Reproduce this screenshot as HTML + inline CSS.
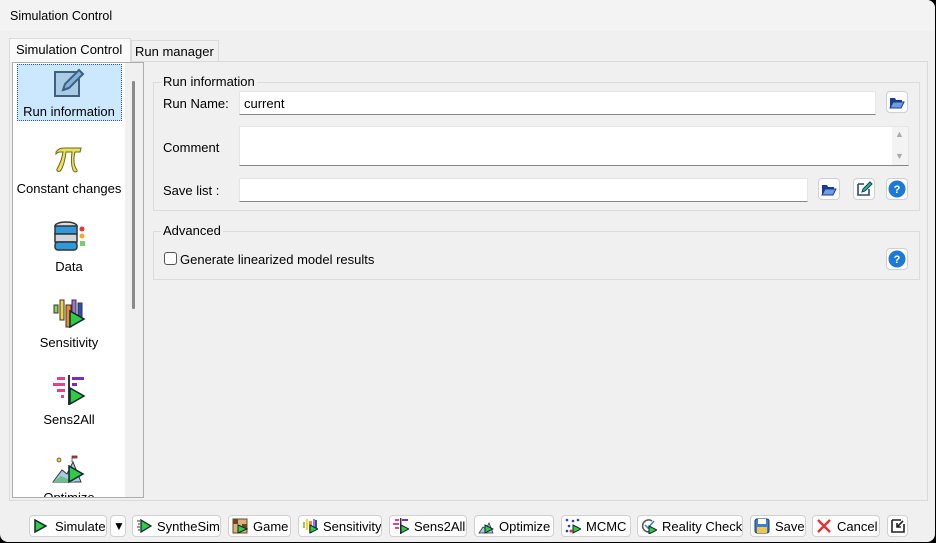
<!DOCTYPE html>
<html><head><meta charset="utf-8"><style>
*{box-sizing:border-box;margin:0;padding:0}
body{width:936px;height:543px;background:#000;font-family:"Liberation Sans",sans-serif;font-size:13px;color:#000;overflow:hidden;position:relative}
#win{position:absolute;left:0;top:0;width:935px;height:542px;background:#f0f0f0;border-radius:0 8px 8px 8px;overflow:hidden}
#title{position:absolute;left:0;top:0;width:935px;height:31px;background:#f3f3f3}
.a{position:absolute}
.txt{position:absolute;white-space:nowrap}
.btn{position:absolute;height:22px;background:#fdfdfd;border:1px solid #d0d0d0;border-radius:4px;display:flex;align-items:center;padding-left:3px;white-space:nowrap;font-size:13px;overflow:hidden}
.btn svg{margin-right:5px;flex:none}
.ib{position:absolute;width:22px;height:22px;background:#fdfdfd;border:1px solid #d0d0d0;border-radius:4px;display:flex;align-items:center;justify-content:center}
.inp{position:absolute;background:#fff;border:1px solid #e5e5e5;border-bottom:1px solid #868686}
.grp{position:absolute;border:1px solid #dcdcdc}
.gt{position:absolute;background:#f0f0f0;padding:0 2px;top:-9px;left:7px;font-size:13px}
.item{position:absolute;left:13px;width:112px;text-align:center;font-size:13px}
.item svg{display:block;margin:0 auto}
</style></head><body>
<div id="win">
<div id="title"><div class="txt" style="left:10px;top:9px;font-size:12.5px">Simulation Control</div></div>

<div class="a" style="left:9px;top:38px;width:122px;height:24px;background:#f9f9f9;border:1px solid #dadada;border-bottom:none"></div>
<div class="txt" style="left:16px;top:42px">Simulation Control</div>
<div class="a" style="left:131px;top:40px;width:88px;height:21px;background:#f0f0f0;border:1px solid #dadada;border-bottom:none"></div>
<div class="txt" style="left:135px;top:44px">Run manager</div>
<div class="a" style="left:9px;top:61px;width:919px;height:440px;border:1px solid #dadada;border-top:none"></div>
<div class="a" style="left:130px;top:61px;width:798px;height:1px;background:#dadada"></div>

<div class="a" style="left:12px;top:62px;width:132px;height:436px;border:1px solid #adadad;background:#fff;overflow:hidden">
 <div class="a" style="left:112px;top:0;width:19px;height:436px;background:#f0f0f0"></div>
 <div class="a" style="left:119px;top:18px;width:3px;height:228px;background:#8a8a8a;border-radius:1px"></div>
</div>
<div class="a" style="left:17px;top:64px;width:105px;height:57px;background:#cce8ff;border:1px dotted #2a5a9a"></div>
<div class="item" style="top:66px">
<svg width="34" height="34" viewBox="0 0 34 34"><rect x="3" y="6" width="24" height="24" fill="#a9cbe6" stroke="#40607e" stroke-width="2"/><path d="M11 24l2-6 14-14 4 4-14 14z" fill="#7fb4e0" stroke="#40607e" stroke-width="2"/><path d="M11 24l6-2" stroke="#40607e" stroke-width="2"/></svg>
<div style="margin-top:4px">Run information</div></div>
<div class="item" style="top:143px">
<svg width="34" height="34" viewBox="0 0 34 34"><path d="M4 9c3-4 6-4 9-4h16l-1 4h-5c-2 8-1 14 2 18 1 2-3 3-4 0-2-5-2-11-1-18h-6c-1 8-3 15-5 18-1 2-5 2-4-1 3-5 5-10 6-17h-3c-2 0-3 1-4 2z" fill="#e8e35a" stroke="#6b6620" stroke-width="1"/></svg>
<div style="margin-top:4px">Constant changes</div></div>
<div class="item" style="top:220px">
<svg width="34" height="34" viewBox="0 0 34 34"><ellipse cx="14" cy="6" rx="11" ry="4" fill="#ddd" stroke="#333" stroke-width="1.5"/><rect x="3" y="6" width="22" height="8" fill="#2e9ad9" stroke="#333" stroke-width="1.5"/><rect x="3" y="14" width="22" height="8" fill="#cfd6dc" stroke="#333" stroke-width="1.5"/><rect x="3" y="22" width="22" height="8" rx="3" fill="#2e9ad9" stroke="#333" stroke-width="1.5"/><circle cx="30" cy="9" r="2.5" fill="#e33"/><circle cx="30" cy="16" r="2.5" fill="#f5a623"/><rect x="28" y="21" width="5" height="5" fill="#7c7"/></svg>
<div style="margin-top:5px">Data</div></div>
<div class="item" style="top:297px">
<svg width="34" height="34" viewBox="0 0 34 34"><rect x="2" y="8" width="4" height="8" fill="#8fd14f" stroke="#333"/><rect x="8" y="3" width="4" height="20" fill="#f5d442" stroke="#333"/><rect x="14" y="8" width="5" height="22" fill="#f08a24" stroke="#333"/><rect x="20" y="3" width="4" height="16" fill="#a070e0" stroke="#333"/><rect x="26" y="6" width="4" height="16" fill="#3050b0" stroke="#333"/><path d="M18 14l14 8-14 8z" fill="#2ecc40" stroke="#123" stroke-width="1.5"/></svg>
<div style="margin-top:4px">Sensitivity</div></div>
<div class="item" style="top:374px">
<svg width="34" height="34" viewBox="0 0 34 34"><rect x="5" y="3" width="8" height="3" fill="#e8408c"/><rect x="1" y="9" width="12" height="3" fill="#e8408c"/><rect x="5" y="15" width="8" height="3" fill="#e8408c"/><rect x="9" y="21" width="3" height="3" fill="#e8408c"/><rect x="16" y="1" width="2" height="30" fill="#333"/><rect x="20" y="3" width="12" height="3" fill="#7030c0"/><rect x="20" y="9" width="5" height="3" fill="#7030c0"/><path d="M18 14l14 8-14 8z" fill="#2ecc40" stroke="#123" stroke-width="1.5"/></svg>
<div style="margin-top:4px">Sens2All</div></div>
<div class="item" style="top:452px;height:45px;overflow:hidden">
<svg width="34" height="34" viewBox="0 0 34 34"><circle cx="7" cy="8" r="2" fill="#f5d442" stroke="#333" stroke-width=".7"/><path d="M1 30l9-12 5 4 6-12 8 20z" fill="#a9cbe6" stroke="#333"/><path d="M1 30l8-6 14 6z" fill="#6cbf8a"/><path d="M20 10v-6h5v2h-5" fill="#e33" stroke="#333" stroke-width=".7"/><path d="M17 14l14 8-14 8z" fill="#2ecc40" stroke="#123" stroke-width="1.5"/></svg>
<div style="margin-top:4px">Optimize</div></div>

<div class="grp" style="left:153px;top:82px;width:767px;height:129px"><div class="gt">Run information</div></div>
<div class="txt" style="left:163px;top:96px">Run Name:</div>
<div class="inp" style="left:239px;top:91px;width:637px;height:24px"></div>
<div class="txt" style="left:244px;top:96px">current</div>
<div class="ib" style="left:886px;top:91px"><svg width="16" height="13" viewBox="0 0 16 13"><path d="M1 2h5l1 2h6v2H4L1 12z" fill="#1e3a8a"/><path d="M4 6h11l-3 6H1z" fill="#6f9be8" stroke="#1e3a8a"/></svg></div>
<div class="txt" style="left:163px;top:140px">Comment</div>
<div class="inp" style="left:239px;top:126px;width:670px;height:40px"></div>
<div class="a" style="left:892px;top:127px;width:16px;height:38px;background:#f3f3f3"></div>
<div class="txt" style="left:895px;top:129px;font-size:9px;color:#aaa">▲</div>
<div class="txt" style="left:895px;top:151px;font-size:9px;color:#aaa">▼</div>
<div class="txt" style="left:163px;top:183px">Save list :</div>
<div class="inp" style="left:239px;top:178px;width:569px;height:24px"></div>
<div class="ib" style="left:818px;top:178px"><svg width="16" height="13" viewBox="0 0 16 13"><path d="M1 2h5l1 2h6v2H4L1 12z" fill="#1e3a8a"/><path d="M4 6h11l-3 6H1z" fill="#6f9be8" stroke="#1e3a8a"/></svg></div>
<div class="ib" style="left:853px;top:178px"><svg width="18" height="18" viewBox="0 0 18 18"><path d="M3 4h6M3 4v11h11v-6" fill="none" stroke="#2a4a6a" stroke-width="1.6"/><path d="M7 12l1-3 7-7 2 2-7 7z" fill="#1fbfa0" stroke="#1a3a4a"/></svg></div>
<div class="ib" style="left:886px;top:178px"><svg width="18" height="18"><circle cx="9" cy="9" r="8.5" fill="#1c79d6"/><text x="9" y="13" font-family="Liberation Sans" font-weight="bold" font-size="11" fill="#fff" text-anchor="middle">?</text></svg></div>

<div class="grp" style="left:153px;top:231px;width:767px;height:49px"><div class="gt">Advanced</div></div>
<div class="a" style="left:164px;top:252px;width:13px;height:13px;border:1px solid #555;border-radius:3px;background:#fff"></div>
<div class="txt" style="left:180px;top:252px">Generate linearized model results</div>
<div class="ib" style="left:886px;top:248px"><svg width="18" height="18"><circle cx="9" cy="9" r="8.5" fill="#1c79d6"/><text x="9" y="13" font-family="Liberation Sans" font-weight="bold" font-size="11" fill="#fff" text-anchor="middle">?</text></svg></div>

<div class="btn" style="left:29px;top:515px;width:78px"><svg width="14" height="14" style="margin-right:8px"><path d="M2 1l11 6-11 6z" fill="#2ecc40" stroke="#123" stroke-width="1.5"/></svg>Simulate</div>
<div class="btn" style="left:110px;top:515px;width:16px;padding-left:2px;font-size:12px">▼</div>
<div class="btn" style="left:132px;top:515px;width:89px"><svg width="16" height="14"><path d="M1 2h3M2 5h2M1 8h3M2 11h2" stroke="#333"/><path d="M5 1l10 6-10 6z" fill="#2ecc40" stroke="#123" stroke-width="1.3"/></svg>SyntheSim</div>
<div class="btn" style="left:228px;top:515px;width:63px"><svg width="16" height="16"><rect x="1" y="1" width="14" height="14" fill="#d7b27a" stroke="#6b4a20"/><rect x="1" y="1" width="5" height="5" fill="#6b4a20"/><rect x="10" y="6" width="5" height="5" fill="#6b4a20"/><path d="M6 7l9 4-9 4z" fill="#2ecc40" stroke="#123"/></svg>Game</div>
<div class="btn" style="left:298px;top:515px;width:84px"><svg width="16" height="16"><rect x="1" y="4" width="2" height="6" fill="#8fd14f"/><rect x="4" y="1" width="2" height="11" fill="#f5d442"/><rect x="7" y="3" width="3" height="12" fill="#f08a24"/><rect x="11" y="1" width="2" height="9" fill="#a070e0"/><rect x="13" y="2" width="2" height="9" fill="#3050b0"/><path d="M8 7l8 4-8 4z" fill="#2ecc40" stroke="#123"/></svg>Sensitivity</div>
<div class="btn" style="left:389px;top:515px;width:78px"><svg width="16" height="16"><rect x="2" y="1" width="4" height="2" fill="#e8408c"/><rect x="0" y="5" width="6" height="2" fill="#e8408c"/><rect x="2" y="9" width="4" height="2" fill="#e8408c"/><rect x="7" y="0" width="1.5" height="16" fill="#333"/><rect x="9" y="1" width="6" height="2" fill="#7030c0"/><path d="M8 7l8 4-8 4z" fill="#2ecc40" stroke="#123"/></svg>Sens2All</div>
<div class="btn" style="left:474px;top:515px;width:80px"><svg width="16" height="16"><path d="M1 15l4-6 3 2 3-6 4 10z" fill="#a9cbe6" stroke="#333" stroke-width=".8"/><path d="M7 7l8 4-8 4z" fill="#2ecc40" stroke="#123"/></svg>Optimize</div>
<div class="btn" style="left:561px;top:515px;width:70px"><svg width="16" height="16"><g fill="#2040d0"><circle cx="2" cy="2" r="1.3"/><circle cx="8" cy="3" r="1.3"/><circle cx="13" cy="2" r="1.3"/><circle cx="4" cy="8" r="1.3"/><circle cx="2" cy="13" r="1.3"/></g><circle cx="6" cy="13" r="1.5" fill="#e33"/><path d="M8 7l8 4-8 4z" fill="#2ecc40" stroke="#123"/></svg>MCMC</div>
<div class="btn" style="left:637px;top:515px;width:106px"><svg width="16" height="16"><path d="M11 3a6 6 0 1 0 1 9" fill="none" stroke="#555" stroke-width="1.5"/><path d="M4 7l3 3 6-7" fill="none" stroke="#2a8ad0" stroke-width="1.5"/><path d="M8 8l8 4-8 4z" fill="#2ecc40" stroke="#123"/></svg>Reality Check</div>
<div class="btn" style="left:750px;top:515px;width:56px"><svg width="16" height="16"><rect x="1" y="1" width="14" height="14" rx="2" fill="#3a7fd0" stroke="#1a3a6a"/><rect x="4" y="1" width="8" height="5" fill="#fff"/><rect x="3" y="9" width="10" height="6" fill="#f5c542"/></svg>Save</div>
<div class="btn" style="left:812px;top:515px;width:68px"><svg width="16" height="16"><path d="M2 2l12 12M14 2L2 14" stroke="#e53030" stroke-width="2.4"/></svg>Cancel</div>
<div class="ib" style="left:887px;top:515px;width:21px"><svg width="16" height="16"><path d="M2 2h9M2 2v12h12V6" fill="none" stroke="#222" stroke-width="1.6"/><path d="M13 3L7 9M7 5v4h4" fill="none" stroke="#222" stroke-width="1.6"/></svg></div>
</div>
</body></html>
